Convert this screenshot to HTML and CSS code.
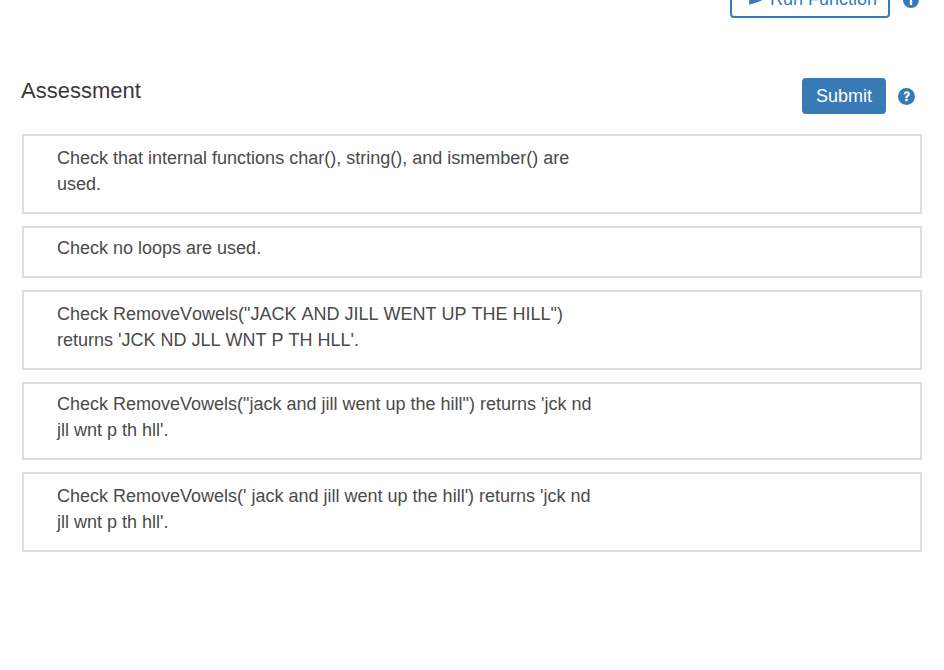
FILE: index.html
```html
<!DOCTYPE html>
<html lang="en">
<head>
<meta charset="utf-8">
<title>Assessment</title>
<link rel="stylesheet" href="styles.css">
</head>
<body>
<div class="run-row">
  <button class="btn-run" type="button"><span class="run-glyph">&#9658;</span> Run Function</button>
  <svg class="help" viewBox="0 0 16 16" aria-hidden="true"><circle cx="8" cy="8" r="8" fill="#387ab5"/><rect x="6.800" y="7" width="2.400" height="6" fill="#fff"/><circle cx="8" cy="4.400" r="1.400" fill="#fff"/></svg>
</div>
<div class="head-row">
  <h2 class="title">Assessment</h2>
  <button class="btn-submit" type="button">Submit</button>
  <svg class="help help-q" viewBox="0 0 16 16" aria-hidden="true"><circle cx="8" cy="8" r="8" fill="#387ab5"/><path d="M5.300 6.100C5.400 4.200 6.600 3.100 8.200 3.100c1.800 0 3 1 3 2.500 0 1.100-.6 1.700-1.400 2.300-.7.500-.9.800-.9 1.400H7c0-1.200.3-1.800 1.100-2.400.7-.5 1-.8 1-1.200 0-.5-.4-.9-1-.9-.6 0-1 .4-1.100 1z" fill="#fff"/><rect x="6.900" y="10.200" width="2.100" height="2.200" rx=".3" fill="#fff"/></svg>
</div>
<div class="checks">
  <div class="check"><p class="check-text">Check that internal functions char(), string(), and ismember() are used.</p></div>
  <div class="check check-tight"><p class="check-text">Check no loops are used.</p></div>
  <div class="check"><p class="check-text check-caps">Check RemoveVowels("JACK AND JILL WENT UP THE HILL") returns 'JCK ND JLL WNT P TH HLL'.</p></div>
  <div class="check check-tight"><p class="check-text">Check RemoveVowels("jack and jill went up the hill") returns 'jck nd jll wnt p th hll'.</p></div>
  <div class="check"><p class="check-text">Check RemoveVowels(' jack and jill went up the hill') returns 'jck nd jll wnt p th hll'.</p></div>
</div>
</body>
</html>
```
FILE: styles.css
```css
html, body {
  margin: 0;
  height: 100%;
  overflow: hidden;
  background: #fff;
}
body {
  font-family: "Liberation Sans", Arial, sans-serif;
  color: #4a4a4a;
}
.run-row {
  display: flex;
  align-items: center;
  justify-content: flex-end;
  height: 36px;
  margin-top: -18px;
  padding-right: 25px;
}
.btn-run {
  box-sizing: border-box;
  width: 160px;
  height: 36px;
  border: 2px solid #387ab5;
  border-radius: 4px;
  background: #fff;
  color: #387ab5;
  font: 18px "Liberation Sans", Arial, sans-serif;
  padding: 0 0 1px 6px;
}
.run-glyph {
  font-family: "DejaVu Sans", sans-serif;
  font-size: 17px;
  margin-right: 3px;
}
.help {
  width: 16px;
  height: 16px;
  flex: none;
}
.run-row .help {
  margin-left: 13px;
  margin-top: -1px;
}
.head-row {
  display: flex;
  align-items: flex-start;
  margin-top: 60px;
  padding: 0 29px 0 21px;
}
.title {
  flex: 1;
  margin: 0;
  font-size: 22px;
  font-weight: 400;
  line-height: 26px;
  color: #3a3a3a;
}
.btn-submit {
  box-sizing: border-box;
  width: 84px;
  height: 36px;
  border: 0;
  border-radius: 4px;
  background: #387ab5;
  color: #fff;
  font: 18px "Liberation Sans", Arial, sans-serif;
  padding: 0;
}
.help-q {
  width: 17px;
  height: 17px;
  margin: 10px 0 0 12px;
}
.checks {
  display: flex;
  flex-direction: column;
  gap: 12px;
  margin: 20px 22px 0;
}
.check {
  border: 2px solid #dedede;
  padding: 9px 33px 15px;
}
.check-tight {
  padding-top: 7px;
}
.check-text {
  margin: 0;
  max-width: 540px;
  font-size: 18px;
  line-height: 26px;
  color: #4a4a4a;
}
.check-caps {
  font-kerning: none;
}
```
